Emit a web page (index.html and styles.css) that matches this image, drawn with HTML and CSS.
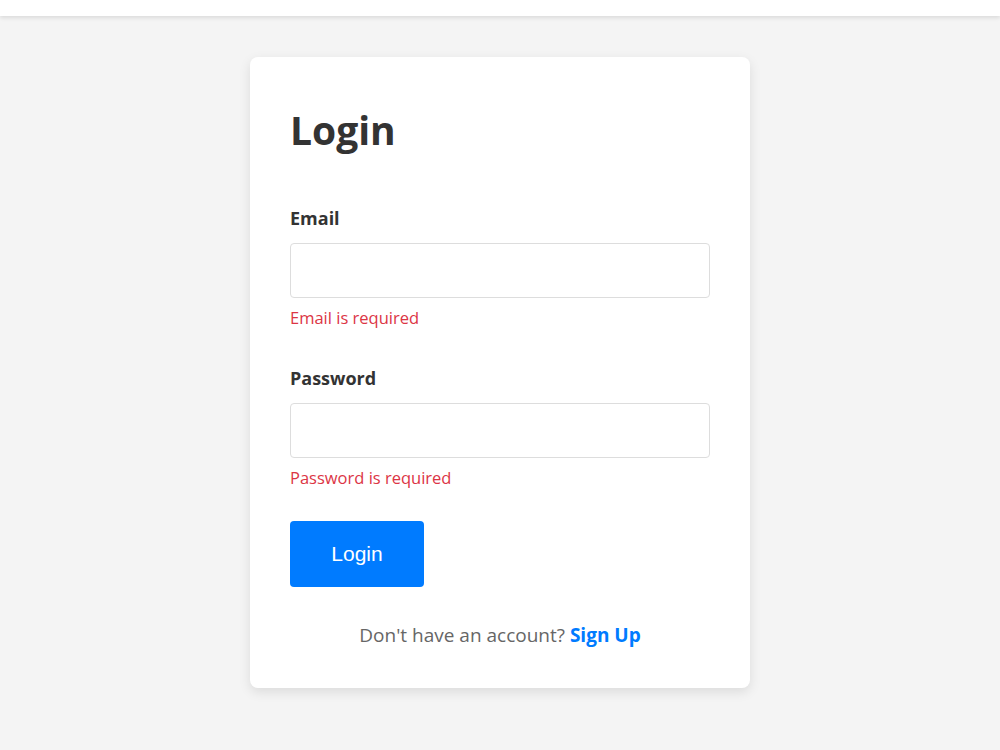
FILE: index.html
```html
<!DOCTYPE html>
<html lang="en">
<head>
<meta charset="utf-8">
<title>Login</title>
<link rel="stylesheet" href="styles.css">
</head>
<body>
<header class="topbar"></header>
<main class="page">
  <form class="card" novalidate>
    <h1 class="title">Login</h1>
    <div class="field">
      <label class="label" for="email">Email</label>
      <input class="input" id="email" type="email">
      <div class="error">Email is required</div>
    </div>
    <div class="field">
      <label class="label" for="password">Password</label>
      <input class="input" id="password" type="password">
      <div class="error">Password is required</div>
    </div>
    <button class="btn" type="button">Login</button>
    <p class="footer">Don't have an account? <a class="link" href="#">Sign Up</a></p>
  </form>
</main>
</body>
</html>
```
FILE: styles.css
```css
* { box-sizing: border-box; }

html, body {
  margin: 0;
  padding: 0;
}

body {
  background: #f4f4f4;
  font-family: "Open Sans", "Noto Sans", sans-serif;
  color: #333;
  min-height: 750px;
}

.topbar {
  height: 16px;
  background: #fff;
  box-shadow: 0 2px 4px rgba(0, 0, 0, 0.1);
}

.page {
  display: flex;
  justify-content: center;
  padding-top: 41px;
}

.card {
  width: 500px;
  background: #fff;
  border-radius: 8px;
  box-shadow: 0 4px 12px rgba(0, 0, 0, 0.1);
  padding: 40px;
}

.title {
  margin: 0 0 42px;
  font-size: 39px;
  font-weight: 700;
  line-height: 66px;
  color: #333;
}

.field + .field {
  margin-top: 36px;
}

.label {
  display: block;
  font-size: 18px;
  font-weight: 700;
  line-height: 26px;
  margin-bottom: 12px;
}

.input {
  display: block;
  width: 100%;
  height: 55px;
  border: 1px solid #ddd;
  border-radius: 4px;
  font-size: 16px;
  padding: 0 12px;
}

.error {
  color: #dc3545;
  font-size: 16.5px;
  line-height: 22px;
  margin-top: 9px;
}

.btn {
  display: block;
  width: 134px;
  height: 66px;
  margin-top: 32px;
  border: 0;
  border-radius: 4px;
  background: #007bff;
  color: #fff;
  font-family: "Liberation Sans", Arial, sans-serif;
  font-size: 21px;
  cursor: pointer;
}

.footer {
  margin: 35px 0 0;
  text-align: center;
  font-size: 19px;
  line-height: 26px;
  color: #666;
}

.link {
  color: #007bff;
  font-weight: 700;
  text-decoration: none;
}
```
